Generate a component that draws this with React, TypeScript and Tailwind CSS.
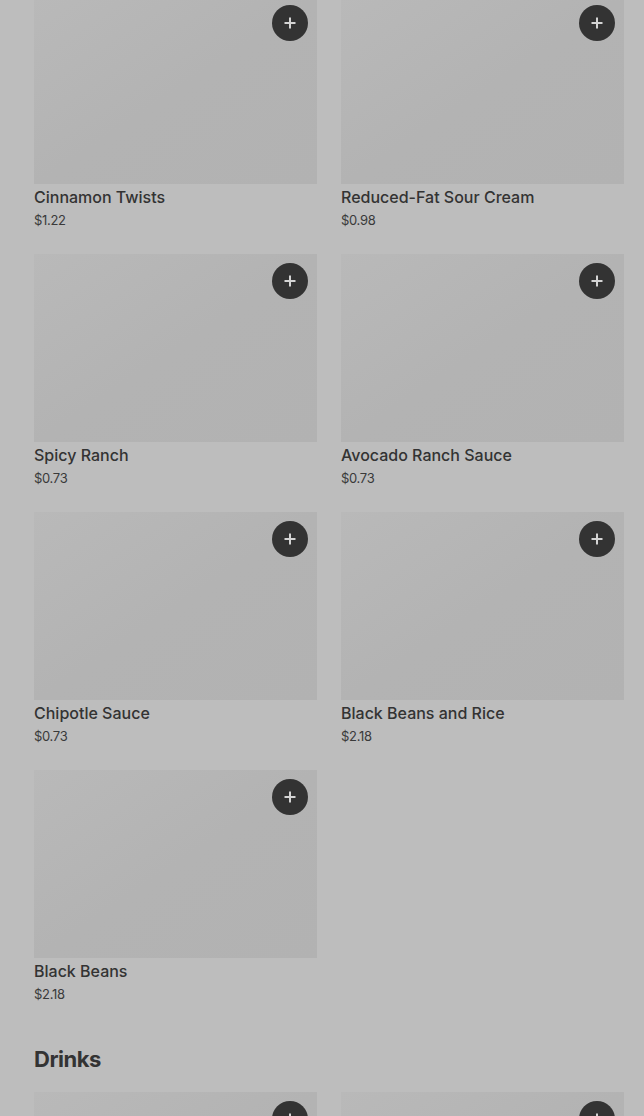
const items = [
  { name: "Cinnamon Twists", price: "$1.22" },
  { name: "Reduced-Fat Sour Cream", price: "$0.98" },
  { name: "Spicy Ranch", price: "$0.73" },
  { name: "Avocado Ranch Sauce", price: "$0.73" },
  { name: "Chipotle Sauce", price: "$0.73" },
  { name: "Black Beans and Rice", price: "$2.18" },
  { name: "Black Beans", price: "$2.18" },
];

function PlusIcon() {
  return (
    <svg width="14" height="14" viewBox="0 0 14 14" fill="none">
      <path d="M7 1.5v11M1.5 7h11" stroke="#d4d4d4" strokeWidth="2" />
    </svg>
  );
}

function ItemImage() {
  return (
    <div className="relative h-[188px] w-full bg-gradient-to-br from-[#b9b9b9] via-[#b3b3b3] to-[#b2b2b2]">
      <button className="absolute right-[9px] top-[9px] flex h-9 w-9 items-center justify-center rounded-full bg-[#333333]">
        <PlusIcon />
      </button>
    </div>
  );
}

function ItemCard({ name, price }: { name: string; price: string }) {
  return (
    <div className="flex flex-col">
      <ItemImage />
      <div className="mt-[1px] text-[16px] font-medium leading-6 text-[#333333]">{name}</div>
      <div className="mt-[1px] text-[13px] leading-5 tracking-[-0.3px] text-[#3a3a3a]">{price}</div>
    </div>
  );
}

export default function App() {
  return (
    <div
      className="h-[1116px] w-full overflow-hidden bg-[#bdbdbd]"
      style={{ fontFamily: "Inter, 'Noto Sans', sans-serif" }}
    >
      <div className="-mt-[4px] pl-[34px] pr-[20px]">
        {/* Sides grid */}
        <div className="grid grid-cols-2 gap-x-6 gap-y-6">
          {items.map((item, i) => (
            <ItemCard key={i} name={item.name} price={item.price} />
          ))}
        </div>

        {/* Drinks */}
        <h2 className="mt-[39px] text-[22px] font-bold leading-8 tracking-[-0.5px] text-[#333333]">
          Drinks
        </h2>
        <div className="mt-[17px] grid grid-cols-2 gap-x-6">
          <ItemImage />
          <ItemImage />
        </div>
      </div>
    </div>
  );
}
